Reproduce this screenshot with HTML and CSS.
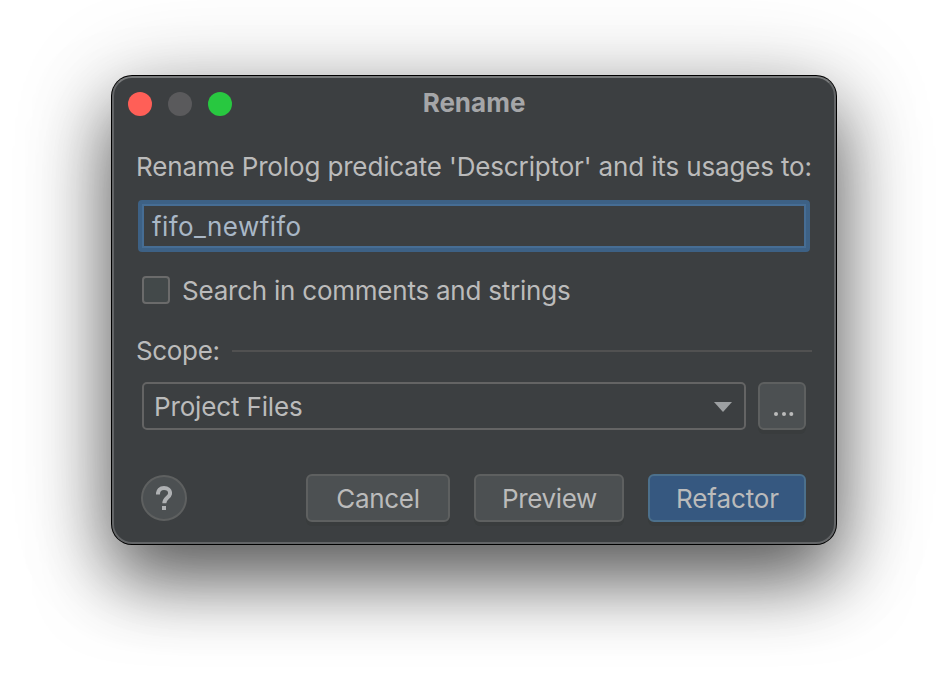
FILE: index.html
```html
<!DOCTYPE html>
<html lang="en">
<head>
<meta charset="utf-8">
<title>Rename</title>
<link rel="stylesheet" href="styles.css">
</head>
<body>
<main class="dialog">
  <header class="titlebar">
    <div class="lights">
      <span class="light close"></span>
      <span class="light minimize"></span>
      <span class="light zoom"></span>
    </div>
    <h1 class="title">Rename</h1>
  </header>
  <label class="prompt" for="name"><span class="t-prompt">Rename Prolog predicate 'Descriptor' and its usages to:</span></label>
  <div class="field" id="name"><span class="t-field">fifo_newfifo</span></div>
  <div class="check-row">
    <span class="checkbox"></span>
    <span class="t-check">Search in comments and strings</span>
  </div>
  <div class="scope-head">
    <span class="t-scope">Scope:</span>
    <span class="rule"></span>
  </div>
  <div class="scope-row">
    <div class="combo">
      <span class="t-combo">Project Files</span>
      <svg class="arrow" width="18" height="10" viewBox="0 0 18 10"><path d="M0 0H18L9 10Z" fill="#9da0a2"/></svg>
    </div>
    <div class="btn more">
      <svg width="20" height="4" viewBox="0 0 20 4" fill="#bbbbbb"><circle cx="2" cy="2" r="2"/><circle cx="10" cy="2" r="2"/><circle cx="17.3" cy="2" r="2"/></svg>
    </div>
  </div>
  <footer class="footer">
    <div class="help"><svg width="16" height="24" viewBox="0 0 16 24" fill="none"><path d="M1.9 8.4C1.9 4.4 4.3 2 8 2s6.1 2.3 6.1 5.3c0 4.2-5.8 4.6-5.8 10" stroke="#afb1b3" stroke-width="4"/><path d="M6 20h4v4H6z" fill="#afb1b3"/></svg></div>
    <div class="btn cancel"><span class="t-cancel">Cancel</span></div>
    <div class="btn preview"><span class="t-preview">Preview</span></div>
    <div class="btn refactor"><span class="t-refactor">Refactor</span></div>
  </footer>
</main>
</body>
</html>
```
FILE: styles.css
```css
* { box-sizing: border-box; }

body {
  margin: 0;
  height: 692px;
  padding: 76px 112px;
  overflow: hidden;
  background: #fff;
  font-family: Inter, "Liberation Sans", sans-serif;
  font-size: 26px;
  line-height: 32px;
  color: #bbbbbb;
  white-space: nowrap;
}

.dialog {
  width: 724px;
  height: 468px;
  border: 2px solid #636567;
  border-top-color: #77797a;
  border-radius: 20px;
  background: #3c3f41;
  box-shadow: 0 0 0 1px #000, 0 36px 72px rgba(0, 0, 0, 0.58), 0 10px 100px rgba(0, 0, 0, 0.22);
}

.titlebar {
  display: grid;
  grid-template-columns: 1fr auto 1fr;
  align-items: center;
  height: 52px;
  padding: 0 14px;
}

.lights { display: flex; gap: 16px; }
.light { width: 24px; height: 24px; border-radius: 50%; }
.close { background: #ff5f57; }
.minimize { background: #5a5a5c; }
.zoom { background: #28c840; }

.title {
  margin: 0 0 2px;
  font-size: 26px;
  font-weight: 700;
  line-height: 32px;
  color: #a5a6a8;
}

.prompt { display: block; height: 32px; margin: 21px 0 0 22px; letter-spacing: -0.145px; }

.field {
  display: flex;
  align-items: center;
  width: 672px;
  height: 52px;
  margin: 17px 0 0 24px;
  padding: 2px 0 0 10px;
  border: 4px solid #3d6185;
  border-radius: 4px;
  box-shadow: inset 0 0 0 2px #466d94;
  color: #a9b7c6;
  letter-spacing: 0.4px;
}

.check-row { display: flex; align-items: center; gap: 12px; height: 32px; margin: 23px 0 0 28px; letter-spacing: -0.23px; }
.checkbox {
  width: 28px;
  height: 28px;
  margin-top: -2px;
  border: 2px solid #6b6b6b;
  border-radius: 4px;
  background: #43494a;
}

.scope-head { display: flex; align-items: center; height: 32px; margin: 28px 22px 0 22px; letter-spacing: -0.35px; }
.rule { width: 580px; height: 2px; margin-left: auto; background: #515151; }

.scope-row { display: flex; gap: 12px; margin: 15px 28px 0; }
.combo {
  display: flex;
  align-items: center;
  justify-content: space-between;
  width: 604px;
  height: 48px;
  padding: 2px 12px 0 10px;
  border: 2px solid #646464;
  border-radius: 5px;
  letter-spacing: -0.15px;
}
.arrow { margin-top: -1px; }

.btn {
  display: flex;
  align-items: center;
  justify-content: center;
  height: 48px;
  padding-top: 2px;
  border: 2px solid #5e6060;
  border-radius: 6px;
  background: #4c5052;
  box-shadow: 0 4px 0 #36393a80;
}
.more { width: 48px; padding: 16px 0 0 3px; }

.footer { display: flex; align-items: center; margin: 44px 28px 0 27px; }
.help {
  display: flex;
  align-items: center;
  justify-content: center;
  width: 46px;
  height: 46px;
  border: 2px solid #5e6060;
  border-radius: 50%;
  background: #4c5052;
}
.cancel { width: 144px; margin-left: auto; letter-spacing: -0.3px; }
.preview { width: 150px; margin-left: 24px; padding-left: 1px; letter-spacing: -0.35px; }
.refactor { width: 158px; margin-left: 24px; padding-left: 1px; border-color: #4c708c; background: #365880; letter-spacing: -0.1px; }
```
